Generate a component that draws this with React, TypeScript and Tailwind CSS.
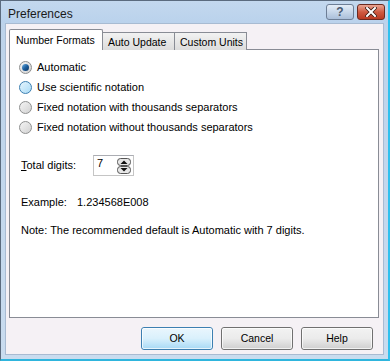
import React from "react";

const font = { fontFamily: '"Liberation Sans", Arial, sans-serif' };

function Radio({ label, checked, hover }: { label: string; checked?: boolean; hover?: boolean }) {
  return (
    <div className="flex items-center h-[20px] gap-[5px]">
      <div
        className={
          "w-[13px] h-[13px] rounded-full border flex items-center justify-center " +
          (hover
            ? "border-[#3c7fb1] bg-gradient-to-br from-[#e6f5fd] to-[#a9dbf6]"
            : "border-[#8e8f8f] bg-gradient-to-br from-[#f4f4f4] to-[#d2d2d2]")
        }
      >
        {checked && (
          <div className="w-[7px] h-[7px] rounded-full bg-gradient-to-br from-[#6fb5e6] via-[#1d5f9e] to-[#0b3561]" />
        )}
      </div>
      <span>{label}</span>
    </div>
  );
}

function Button({ label, primary }: { label: string; primary?: boolean }) {
  return (
    <div
      className={
        "w-[72px] h-[23px] rounded-[3px] border flex items-center justify-center " +
        (primary
          ? "border-[#3c7fb1] bg-gradient-to-b from-[#eaf6fd] via-[#d9f0fc] to-[#a7d9f5]"
          : "border-[#707070] bg-gradient-to-b from-[#f2f2f2] via-[#ebebeb] to-[#cfcfcf]")
      }
    >
      <div className="w-full h-full rounded-[2px] border border-white/70 flex items-center justify-center">
        {label}
      </div>
    </div>
  );
}

export default function App() {
  return (
    <div
      style={font}
      className="relative w-[390px] h-[361px] flex flex-col bg-gradient-to-b from-[#bcd2ea] to-[#c9dcef] border-l border-t border-[#5b6b7e] border-r-[2px] border-r-[#2fc0ee] border-b-[2px] border-b-[#2fb5dd] text-[10.5px] text-black"
    >
      {/* title bar */}
      <div className="h-[22px] flex items-center justify-between pl-[7px] pr-[3px] bg-gradient-to-b from-[#c3d8ee] to-[#bad2ec]">
        <span className="text-[12px] text-[#1a1a1a] mt-[3px]">Preferences</span>
        <div className="flex gap-[3px] mt-[3px] self-start">
          <div className="w-[28px] h-[16px] rounded-[3px] border border-[#6d7e95] bg-gradient-to-b from-[#e4edf7] via-[#c7d7ea] to-[#aabfd9] flex items-center justify-center text-[12px] font-bold text-[#4a5a70]">
            ?
          </div>
          <div className="w-[28px] h-[16px] rounded-[3px] border border-[#6b2a20] bg-gradient-to-b from-[#e8a493] via-[#cf5a41] to-[#b93a22] flex items-center justify-center">
            <svg width="12" height="10" viewBox="0 0 12 10">
              <path d="M2 1 L10 9 M10 1 L2 9" stroke="#3b1810" strokeWidth="3.6" strokeLinecap="square" />
              <path d="M2 1 L10 9 M10 1 L2 9" stroke="#ffffff" strokeWidth="2" strokeLinecap="square" />
            </svg>
          </div>
        </div>
      </div>

      {/* dialog body */}
      <div className="flex-1 mx-[4px] mb-[4px] bg-[#f5f1f5] border border-[#a8bbd2] pt-[5px] px-[3px] flex flex-col">
        {/* tabs */}
        <div className="flex items-end h-[21px] relative z-10 whitespace-nowrap">
          <div className="w-[94px] h-[21px] bg-white border border-b-0 border-[#898c95] pl-[6px] pt-[3px] rounded-t-[2px]">
            Number Formats
          </div>
          <div className="w-[72px] h-[18px] bg-gradient-to-b from-[#f2f2f2] to-[#dcdcdc] border border-l-0 border-b-0 border-[#898c95] pl-[5px] pt-[2px]">
            Auto Update
          </div>
          <div className="w-[72px] h-[18px] bg-gradient-to-b from-[#f2f2f2] to-[#dcdcdc] border border-l-0 border-b-0 border-[#898c95] pl-[5px] pt-[2px]">
            Custom Units
          </div>
        </div>
        {/* panel */}
        <div className="w-[370px] h-[269px] -mt-px bg-white border border-[#898c95] pl-[9px] pt-[7px] flex flex-col text-[11px]">
          <Radio label="Automatic" checked />
          <Radio label="Use scientific notation" hover />
          <Radio label="Fixed notation with thousands separators" />
          <Radio label="Fixed notation without thousands separators" />

          <div className="flex items-center mt-[18px] pl-[2px]">
            <span className="w-[72px]">
              <span className="underline">T</span>otal digits:
            </span>
            <div className="w-[41px] h-[21px] border border-[#c5c5c5] border-t-[#abadb3] flex items-center justify-between pl-[3px] pr-[2px]">
              <span className="-mt-[4px]">7</span>
              <svg width="14" height="16" viewBox="0 0 14 16">
                <rect x="0.5" y="0.5" width="13" height="7" rx="3" fill="#e6e6e6" stroke="#555" />
                <rect x="0.5" y="8.5" width="13" height="7" rx="3" fill="#e6e6e6" stroke="#555" />
                <path d="M3.5 6 L7 2.5 L10.5 6 Z" fill="#111" />
                <path d="M3.5 10 L7 13.5 L10.5 10 Z" fill="#111" />
              </svg>
            </div>
          </div>

          <div className="flex mt-[18px] pl-[2px]">
            <span className="w-[56px]">Example:</span>
            <span>1.234568E008</span>
          </div>

          <div className="mt-[11px] pl-[2px]">Note: The recommended default is Automatic with 7 digits.</div>
        </div>

        {/* buttons */}
        <div className="flex justify-end gap-[8px] mt-[9px] pr-[7px]">
          <Button label="OK" primary />
          <Button label="Cancel" />
          <Button label="Help" />
        </div>
      </div>
    </div>
  );
}
